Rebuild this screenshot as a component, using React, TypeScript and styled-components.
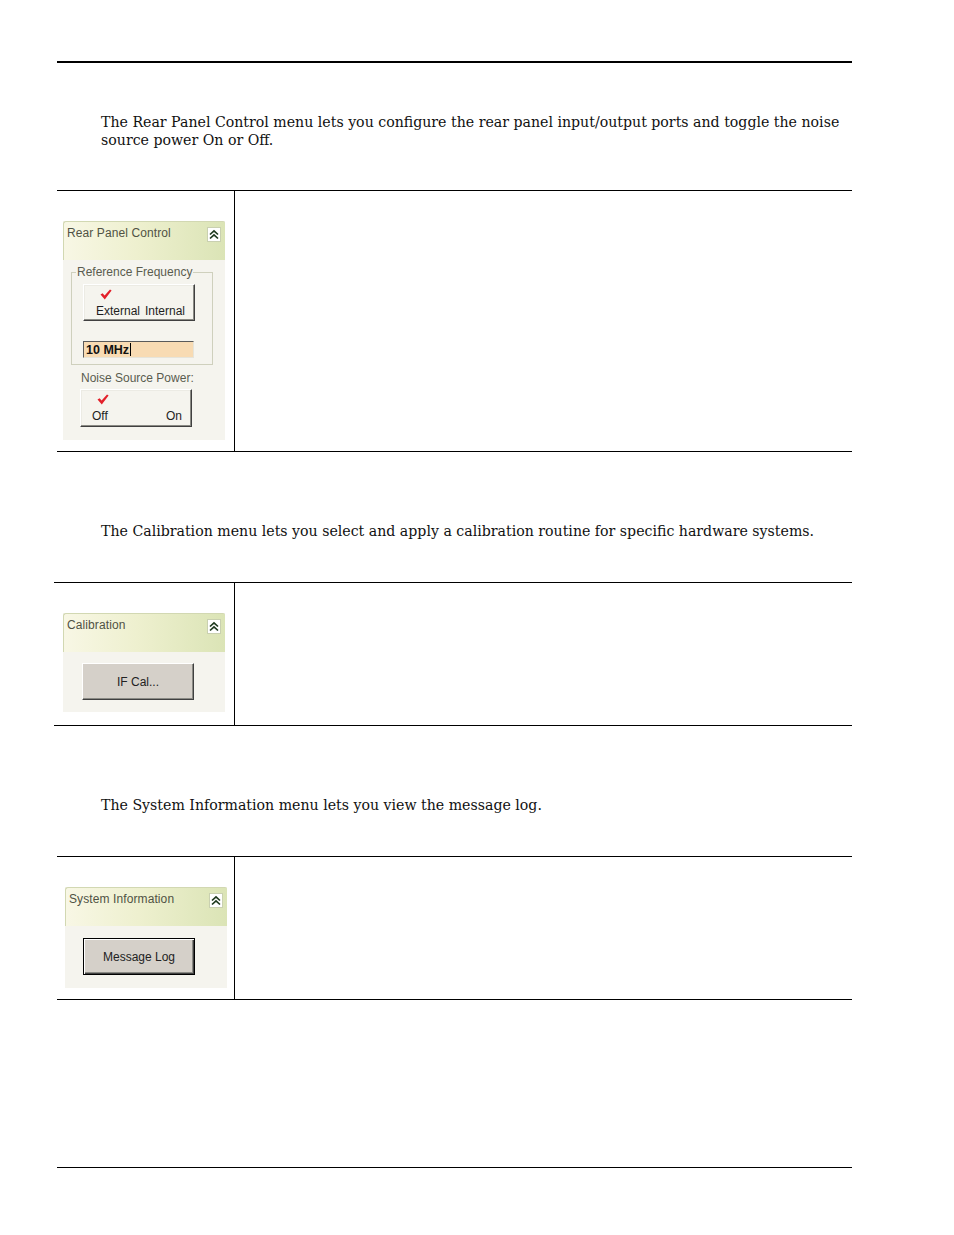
import React from "react";
import styled, { createGlobalStyle } from "styled-components";

const GlobalStyle = createGlobalStyle`
  html, body { margin: 0; padding: 0; background: #ffffff; }
  body { font-family: "DejaVu Serif", "Liberation Serif", serif; color: #000; }
`;

const Page = styled.div`
  width: 954px;
  padding-top: 61px;
  display: flex;
  flex-direction: column;
`;

const Rule = styled.div<{ $thick: number; $top: number }>`
  margin: ${(p) => p.$top}px 0 0 57px;
  width: 795px;
  height: ${(p) => p.$thick}px;
  background: #000;
`;

const Para = styled.p<{ $top: number }>`
  margin: ${(p) => p.$top}px 0 0 101px;
  width: 751px;
  font-family: "DejaVu Serif", "Liberation Serif", serif;
  font-size: 14.15px;
  line-height: 18px;
  color: #111;
`;

const Table = styled.div<{ $left: number; $cell: number; $top: number }>`
  margin: ${(p) => p.$top}px 0 0 ${(p) => p.$left}px;
  width: ${(p) => 852 - p.$left}px;
  display: grid;
  grid-template-columns: ${(p) => p.$cell}px 1fr;
  border-top: 1px solid #000;
  border-bottom: 1px solid #000;
`;

const LeftCell = styled.div<{ $padLeft: number; $padBottom: number }>`
  border-right: 1px solid #000;
  padding: 30px 0 ${(p) => p.$padBottom}px ${(p) => p.$padLeft}px;
`;

const RightCell = styled.div``;

const Panel = styled.div`
  width: 162px;
  display: flex;
  flex-direction: column;
  background: #f5f4ee;
  font-family: "Liberation Sans", Arial, sans-serif;
  font-size: 12px;
  line-height: 14px;
`;

const PanelHeader = styled.div`
  height: 39px;
  box-sizing: border-box;
  padding: 4px 4px 0 3px;
  display: flex;
  justify-content: space-between;
  align-items: flex-start;
  background: linear-gradient(to right, #f8f7e5 0%, #eef0cf 45%, #dbe4b6 100%);
  border-top: 1px solid #d2d8b2;
  border-left: 1px solid #d2d8b2;
  border-top-left-radius: 3px;
  border-top-right-radius: 2px;
`;

const PanelTitle = styled.span`
  color: #505244;
  letter-spacing: 0.1px;
`;

const CollapseBox = styled.span`
  display: block;
  width: 14px;
  height: 15px;
  margin-top: 1px;
`;

const PanelBody = styled.div<{ $pad: string }>`
  display: flex;
  flex-direction: column;
  align-items: flex-start;
  padding: ${(p) => p.$pad};
`;

const GroupBox = styled.fieldset`
  margin: 5px 0 0 8px;
  width: 142px;
  box-sizing: border-box;
  padding: 0;
  border: 1px solid #cfd0bd;
  min-width: 0;
`;

const GroupLegend = styled.legend`
  margin-left: 4px;
  padding: 0 1px;
  color: #5a5c4f;
  font-size: 12px;
  line-height: 14px;
`;

const GroupContent = styled.div`
  display: flex;
  flex-direction: column;
  align-items: flex-start;
  padding: 5px 0 6px 11px;
`;

const ToggleButton = styled.div<{ $padLeft: number; $height: number }>`
  width: 112px;
  height: ${(p) => p.$height}px;
  box-sizing: border-box;
  display: flex;
  justify-content: space-between;
  align-items: flex-start;
  padding: 4px 9px 0 ${(p) => p.$padLeft}px;
  background: #f5f4ee;
  border: 1px solid;
  border-color: #ffffff #404040 #404040 #ffffff;
  box-shadow: inset -1px -1px 0 #8a8a84, inset 1px 1px 0 #ecebe4;
  color: #1e1e1e;
  margin-left: ${(p) => (p.$padLeft < 12 ? 17 : 0)}px;
`;

const Option = styled.div`
  display: flex;
  flex-direction: column;
  align-items: flex-start;
`;

const CheckSlot = styled.div<{ $offset: number }>`
  height: 15px;
  padding-left: ${(p) => p.$offset}px;
`;

const ValueField = styled.div`
  margin-top: 20px;
  width: 111px;
  height: 17px;
  box-sizing: border-box;
  display: flex;
  align-items: center;
  padding-left: 2px;
  background: #f8dbb3;
  border: 1px solid;
  border-color: #5a5a5a #e6e4da #e6e4da #5a5a5a;
  font-weight: bold;
  font-size: 12.5px;
  color: #111;
`;

const Caret = styled.span`
  display: inline-block;
  width: 1px;
  height: 13px;
  margin-left: 1px;
  background: #000;
`;

const FieldLabel = styled.div`
  margin: 6px 0 4px 18px;
  color: #5a5c4f;
`;

const PushButton = styled.div<{ $default?: boolean; $left: number }>`
  margin-left: ${(p) => p.$left}px;
  width: 112px;
  height: 37px;
  box-sizing: border-box;
  display: flex;
  align-items: center;
  justify-content: center;
  background: #d5d0c9;
  color: #222;
  border: 1px solid;
  border-color: ${(p) =>
    p.$default ? "#000 #000 #000 #000" : "#ffffff #404040 #404040 #ffffff"};
  box-shadow: ${(p) =>
    p.$default
      ? "inset 1px 1px 0 #ffffff, inset -1px -1px 0 #404040, inset -2px -2px 0 #8a8a84"
      : "inset -1px -1px 0 #8a8a84"};
  padding-top: 1px;
`;

const CheckMark = () => (
  <svg width="12" height="11" viewBox="0 0 12 11">
    <path d="M0.5 5.6 L2.6 4.3 L4.6 6.6 L10 0.4 L11.6 1.6 L4.8 10.6 Z" fill="#e3202a" />
  </svg>
);

const CollapseIcon = () => (
  <CollapseBox>
    <svg width="14" height="15" viewBox="0 0 14 15">
      <rect x="0.5" y="0.5" width="13" height="14" fill="#ffffff" stroke="#c9d0b0" />
      <polyline points="3,7.5 7,3.8 11,7.5" fill="none" stroke="#1f3a1f" strokeWidth="1.7" />
      <polyline points="3,11.5 7,7.8 11,11.5" fill="none" stroke="#1f3a1f" strokeWidth="1.7" />
    </svg>
  </CollapseBox>
);

const Header = ({ title }: { title: string }) => (
  <PanelHeader>
    <PanelTitle>{title}</PanelTitle>
    <CollapseIcon />
  </PanelHeader>
);

export default function App() {
  return (
    <>
      <GlobalStyle />
      <Page>
        <Rule $thick={2} $top={0} />
        <Para $top={50}>
          The Rear Panel Control menu lets you configure the rear panel input/output ports and toggle the noise
          source power On or Off.
        </Para>

        <Table $left={57} $cell={178} $top={41}>
          <LeftCell $padLeft={6} $padBottom={11}>
            <Panel>
              <Header title="Rear Panel Control" />
              <PanelBody $pad="0 0 13px 0">
                <GroupBox>
                  <GroupLegend>Reference Frequency</GroupLegend>
                  <GroupContent>
                    <ToggleButton $padLeft={12} $height={37}>
                      <Option>
                        <CheckSlot $offset={4}>
                          <CheckMark />
                        </CheckSlot>
                        <span>External</span>
                      </Option>
                      <Option>
                        <CheckSlot $offset={0} />
                        <span>Internal</span>
                      </Option>
                    </ToggleButton>
                    <ValueField>
                      10 MHz
                      <Caret />
                    </ValueField>
                  </GroupContent>
                </GroupBox>
                <FieldLabel>Noise Source Power:</FieldLabel>
                <ToggleButton $padLeft={11} $height={38}>
                  <Option>
                    <CheckSlot $offset={5}>
                      <CheckMark />
                    </CheckSlot>
                    <span>Off</span>
                  </Option>
                  <Option>
                    <CheckSlot $offset={0} />
                    <span>On</span>
                  </Option>
                </ToggleButton>
              </PanelBody>
            </Panel>
          </LeftCell>
          <RightCell />
        </Table>

        <Para $top={70}>
          The Calibration menu lets you select and apply a calibration routine for specific hardware systems.
        </Para>

        <Table $left={54} $cell={181} $top={42}>
          <LeftCell $padLeft={9} $padBottom={13}>
            <Panel>
              <Header title="Calibration" />
              <PanelBody $pad="11px 0 12px 0">
                <PushButton $left={19}>IF Cal...</PushButton>
              </PanelBody>
            </Panel>
          </LeftCell>
          <RightCell />
        </Table>

        <Para $top={70}>The System Information menu lets you view the message log.</Para>

        <Table $left={57} $cell={178} $top={42}>
          <LeftCell $padLeft={8} $padBottom={11}>
            <Panel>
              <Header title="System Information" />
              <PanelBody $pad="12px 0 13px 0">
                <PushButton $left={18} $default>
                  Message Log
                </PushButton>
              </PanelBody>
            </Panel>
          </LeftCell>
          <RightCell />
        </Table>

        <Rule $thick={1} $top={167} />
      </Page>
    </>
  );
}
